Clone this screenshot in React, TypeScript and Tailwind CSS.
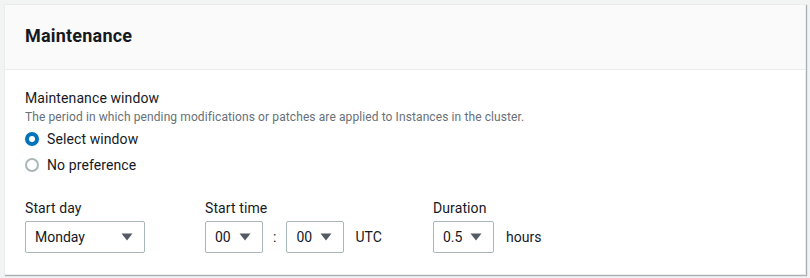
import React from "react";

function Caret() {
  return (
    <svg width="12" height="8" viewBox="0 0 12 8" className="shrink-0">
      <path d="M0.5 0.5h11L6 7.5z" fill="#545b64" />
    </svg>
  );
}

function Select({ value, width }: { value: string; width: string }) {
  return (
    <div
      className={`flex h-[32px] items-center justify-between rounded-[2px] border border-[#aab7b8] bg-white pl-[9px] pr-[11px] text-[14px] text-[#16191f] ${width}`}
    >
      <span>{value}</span>
      <Caret />
    </div>
  );
}

function Radio({ checked, label }: { checked?: boolean; label: string }) {
  return (
    <div className="flex h-[26px] items-center gap-[8px]">
      {checked ? (
        <span className="flex h-[14px] w-[14px] items-center justify-center rounded-full bg-[#0073bb]">
          <span className="h-[6px] w-[6px] rounded-full bg-white" />
        </span>
      ) : (
        <span className="h-[14px] w-[14px] rounded-full border-2 border-[#aab7b8] bg-white" />
      )}
      <span className="text-[14px] tracking-[0.1px] text-[#16191f]">{label}</span>
    </div>
  );
}

export default function App() {
  return (
    <div
      className="min-h-[278px] bg-[#f2f3f3] p-[4px]"
      style={{ fontFamily: 'Roboto, Arial, sans-serif' }}
    >
      <div className="w-[802px] border border-[#eaeded] bg-white shadow-[1px_1px_1px_0_rgba(0,28,36,0.3)]">
        <div className="flex h-[65px] items-center border-b border-[#eaeded] bg-[#fafafa] px-[20px] pb-[3px]">
          <h2 className="text-[18px] font-bold tracking-[0.2px] text-[#16191f]">Maintenance</h2>
        </div>
        <div className="px-[20px] pb-[21px] pt-[17px]">
          <div className="text-[14px] leading-[22px] tracking-[0.1px] text-[#16191f]">Maintenance window</div>
          <p className="text-[12px] leading-[16px] tracking-[0.1px] text-[#687078]">
            The period in which pending modifications or patches are applied to Instances in the cluster.
          </p>
          <div className="mt-[1px] flex flex-col">
            <Radio checked label="Select window" />
            <Radio label="No preference" />
          </div>
          <div className="mt-[19px] flex items-start">
            <div className="w-[180px]">
              <div className="mb-[2px] text-[14px] leading-[22px] tracking-[0.1px] text-[#16191f]">Start day</div>
              <Select value="Monday" width="w-[120px]" />
            </div>
            <div className="w-[228px]">
              <div className="mb-[2px] text-[14px] leading-[22px] tracking-[0.1px] text-[#16191f]">Start time</div>
              <div className="flex items-center">
                <Select value="00" width="w-[58px]" />
                <span className="mx-[10px] text-[14px] text-[#16191f]">:</span>
                <Select value="00" width="w-[58px]" />
                <span className="ml-[11px] text-[14px] text-[#16191f]">UTC</span>
              </div>
            </div>
            <div>
              <div className="mb-[2px] text-[14px] leading-[22px] tracking-[0.1px] text-[#16191f]">Duration</div>
              <div className="flex items-center">
                <Select value="0.5" width="w-[61px]" />
                <span className="ml-[12px] text-[14px] text-[#16191f]">hours</span>
              </div>
            </div>
          </div>
        </div>
      </div>
    </div>
  );
}
